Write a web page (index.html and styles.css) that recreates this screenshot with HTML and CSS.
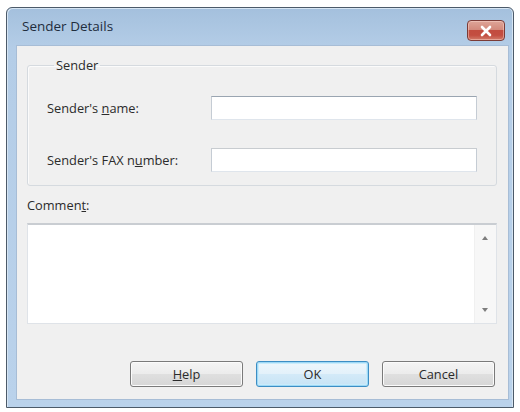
FILE: index.html
```html
<!DOCTYPE html>
<html lang="en">
<head>
<meta charset="utf-8">
<title>Sender Details</title>
<link rel="stylesheet" href="styles.css">
</head>
<body>
<div class="window">
  <div class="titlebar">
    <span class="title">Sender Details</span>
    <button class="close" type="button" aria-label="Close">
      <svg width="14" height="12" viewBox="0 0 14 12"><path d="M3 2 L11 10 M11 2 L3 10" stroke="#fff" stroke-width="2.6" stroke-linecap="round"/></svg>
    </button>
  </div>
  <div class="client">
    <fieldset class="group">
      <legend class="legend">Sender</legend>
      <div class="row">
        <label class="label">Sender's <u>n</u>ame:</label>
        <div class="input"></div>
      </div>
      <div class="row">
        <label class="label">Sender's FAX n<u>u</u>mber:</label>
        <div class="input input-b"></div>
      </div>
    </fieldset>
    <div class="comment-label">Commen<u>t</u>:</div>
    <div class="textarea">
      <div class="scroll">
        <span class="arrow up"></span>
        <span class="arrow down"></span>
      </div>
    </div>
    <div class="buttons">
      <button class="btn" type="button"><u>H</u>elp</button>
      <button class="btn btn-default" type="button">OK</button>
      <button class="btn" type="button">Cancel</button>
    </div>
  </div>
</div>
</body>
</html>
```
FILE: styles.css
```css
* { box-sizing: border-box; }
html, body { margin: 0; padding: 0; background: #ffffff; }
body {
  font-family: "Open Sans", "Noto Sans", "DejaVu Sans", sans-serif;
  font-size: 12.8px;
  color: #2b2b2b;
}
.window {
  margin: 7px 0 0 6px;
  width: 508px;
  height: 401px;
  border: 1px solid #4c5a69;
  border-radius: 6px 6px 0 0;
  background: linear-gradient(to bottom, #a4c0dd 0px, #b4cde7 40px, #bad2eb 100%);
  padding: 0 4px 7px 9px;
  display: flex;
  flex-direction: column;
  box-shadow: inset 1px 1px 0 #d6e5f3, inset -1px 0 0 #d6e5f3;
}
.titlebar {
  height: 37px;
  display: flex;
  align-items: center;
  justify-content: space-between;
  padding-left: 6px;
  padding-right: 4px;
}
.title {
  font-size: 13.5px;
  color: #1f2d3d;
  margin-top: -1px;
}
.close {
  width: 38px;
  height: 21px;
  padding: 0;
  align-self: flex-start;
  margin-top: 12px;
  border: 1px solid #7b3b36;
  border-radius: 4px;
  background: linear-gradient(to bottom, #dea598 0%, #d38a7c 45%, #c24c3f 50%, #c34e41 75%, #d27b69 100%);
  display: flex;
  align-items: center;
  justify-content: center;
  box-shadow: inset 0 0 0 1px rgba(255,220,210,0.45);
}
.client {
  flex: 1;
  background: #f0f0f0;
  border: 1px solid #a7bdd6;
  padding: 11px 11px 12px 10px;
  display: flex;
  flex-direction: column;
}
.group {
  margin: 0;
  height: 129px;
  border: 1px solid #d5dadf;
  border-radius: 3px;
  padding: 7px 19px 0 19px;
  box-shadow: inset 1px 1px 0 #fbfbfb;
}
.legend {
  padding: 0 2px;
  margin-left: 7px;
  line-height: 16px;
}
.row {
  display: flex;
  align-items: center;
  justify-content: space-between;
  height: 24px;
  margin-top: 16px;
}
.row + .row { margin-top: 28px; }
.label { color: #2b2b2b; }
.input {
  width: 266px;
  height: 24px;
  background: #ffffff;
  border: 1px solid #dfe5ec;
  border-top-color: #9aa5b1;
  border-left-color: #c5ccd4;
  border-right-color: #c5ccd4;
}
.input-b { border-top-color: #c8ccd0; }
.comment-label {
  margin-top: 11px;
  line-height: 16px;
}
.textarea {
  margin-top: 10px;
  width: 470px;
  height: 101px;
  background: #ffffff;
  border: 1px solid #dfe3e8;
  border-top: 2px solid #c9cdd2;
  display: flex;
  justify-content: flex-end;
}
.scroll {
  width: 22px;
  height: 100%;
  background: #f7f7f7;
  border-left: 1px solid #f0f0f0;
  position: relative;
}
.arrow {
  position: absolute;
  left: 7px;
  width: 0;
  height: 0;
  border-left: 3.5px solid transparent;
  border-right: 3.5px solid transparent;
}
.arrow.up { top: 11px; border-bottom: 4px solid #7d7d7d; }
.arrow.down { bottom: 11px; border-top: 4px solid #7d7d7d; }
.buttons {
  margin-top: auto;
  display: flex;
  justify-content: flex-end;
  gap: 13px;
  padding-right: 2px;
}
.btn {
  width: 113px;
  height: 26px;
  font-family: inherit;
  font-size: 12.8px;
  color: #2b2b2b;
  border: 1px solid #7a7a7a;
  border-radius: 3px;
  background: linear-gradient(to bottom, #f4f4f4 0%, #ececec 48%, #dfdfdf 52%, #d6d6d6 100%);
  box-shadow: inset 0 0 0 1px #fbfbfb;
  padding: 0;
}
.btn-default {
  border-color: #3c8ec4;
  background: linear-gradient(to bottom, #eef7fc 0%, #e3f1fa 48%, #d3eaf8 52%, #c7e3f5 100%);
  box-shadow: inset 0 0 0 1px #9ed8f6, inset 0 0 0 2px #c9ecfb;
}
```
